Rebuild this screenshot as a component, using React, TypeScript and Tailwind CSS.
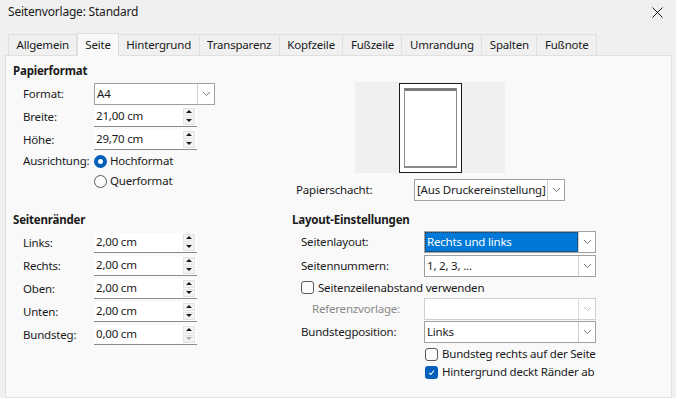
import React from 'react';

const Chevron: React.FC<{ disabled?: boolean }> = ({ disabled }) => (
  <svg width="9" height="6" viewBox="0 0 9 6" className="block">
    <polyline points="1,1 4.5,4.5 8,1" fill="none" stroke={disabled ? '#c4c4c4' : '#7a7a7a'} strokeWidth="1" />
  </svg>
);

const Dropdown: React.FC<{ value: string; width: string; selected?: boolean; disabled?: boolean }> = ({
  value,
  width,
  selected,
  disabled,
}) => (
  <div className={`flex h-[22px] ${width} border ${disabled ? 'border-[#cfcfcf]' : 'border-[#a0a0a0]'} bg-white`}>
    <div
      className={`flex-1 flex items-center px-[2px] whitespace-nowrap overflow-hidden ${
        selected ? 'bg-[#0078d7] text-white outline outline-1 outline-dotted outline-[#333] -outline-offset-1' : ''
      }`}
    >
      {value}
    </div>
    <div className={`w-[17px] flex items-center justify-center border-l ${disabled ? 'border-[#dedede]' : 'border-[#cfcfcf]'}`}>
      <Chevron disabled={disabled} />
    </div>
  </div>
);

const Spin: React.FC<{ value: string; downDisabled?: boolean }> = ({ value, downDisabled }) => (
  <div className="flex h-[20px] w-[103px] bg-white border-b border-[#8a8a8a] items-center">
    <div className="flex-1 pl-[2px]">{value}</div>
    <div className="flex flex-col gap-[1px] pr-[2px]">
      <div className="w-[12px] h-[8px] bg-[#f3f3f3] border border-[#e2e2e2] flex items-center justify-center">
        <div className="w-0 h-0 border-l-[3px] border-r-[3px] border-b-[3px] border-l-transparent border-r-transparent border-b-[#1a1a1a]" />
      </div>
      <div className="w-[12px] h-[8px] bg-[#f3f3f3] border border-[#e2e2e2] flex items-center justify-center">
        <div
          className={`w-0 h-0 border-l-[3px] border-r-[3px] border-t-[3px] border-l-transparent border-r-transparent ${
            downDisabled ? 'border-t-[#b0b0b0]' : 'border-t-[#1a1a1a]'
          }`}
        />
      </div>
    </div>
  </div>
);

const Checkbox: React.FC<{ checked?: boolean; label: string }> = ({ checked, label }) => (
  <div className="flex items-center gap-[4px] h-[18px]">
    {checked ? (
      <div className="w-[13px] h-[13px] rounded-[3px] bg-[#005fb8] flex items-center justify-center">
        <svg width="9" height="9" viewBox="0 0 9 9">
          <polyline points="2,4.8 3.8,6.5 7,2.5" fill="none" stroke="#fff" strokeWidth="1.1" />
        </svg>
      </div>
    ) : (
      <div className="w-[13px] h-[13px] rounded-[3px] border border-[#5a5a5a] bg-[#fbfbfb]" />
    )}
    <span>{label}</span>
  </div>
);

const Radio: React.FC<{ checked?: boolean; label: string }> = ({ checked, label }) => (
  <div className="flex items-center gap-[3px] h-[20px]">
    {checked ? (
      <div className="w-[13px] h-[13px] rounded-full bg-[#005fb8] flex items-center justify-center">
        <div className="w-[5px] h-[5px] rounded-full bg-white" />
      </div>
    ) : (
      <div className="w-[13px] h-[13px] rounded-full border border-[#5a5a5a] bg-[#fbfbfb]" />
    )}
    <span>{label}</span>
  </div>
);

const tabs = ['Allgemein', 'Seite', 'Hintergrund', 'Transparenz', 'Kopfzeile', 'Fußzeile', 'Umrandung', 'Spalten', 'Fußnote'];

const App: React.FC = () => {
  const margins: [string, string, boolean?][] = [
    ['Links:', '2,00 cm'],
    ['Rechts:', '2,00 cm'],
    ['Oben:', '2,00 cm'],
    ['Unten:', '2,00 cm'],
    ['Bundsteg:', '0,00 cm', true],
  ];

  return (
    <div className="w-[676px] h-[398px] bg-[#f0f0f0] text-[11.5px] tracking-[-0.2px] text-[#1a1a1a] font-['Noto_Sans',sans-serif] overflow-hidden flex flex-col">
      {/* Titelleiste */}
      <div className="h-[24px] flex items-center justify-between pl-[8px] pr-[13px] shrink-0">
        <span className="text-[12px]">Seitenvorlage: Standard</span>
        <svg width="11" height="11" viewBox="0 0 11 11">
          <path d="M0.5 0.5 L10.5 10.5 M10.5 0.5 L0.5 10.5" stroke="#1a1a1a" strokeWidth="1" />
        </svg>
      </div>

      {/* Reiter */}
      <div className="flex items-end pl-[8px] h-[31px] shrink-0">
        {tabs.map((t) =>
          t === 'Seite' ? (
            <div key={t} className="h-[23px] px-[7px] pb-[1px] flex items-center bg-[#f9f9f9] border border-b-0 border-[#e0e0e0] -mb-px relative z-10">
              {t}
            </div>
          ) : (
            <div key={t} className="h-[21px] px-[7.5px] flex items-center bg-[#f0f0f0] border border-b-0 border-l-0 first:border-l border-[#e0e0e0]">
              {t}
            </div>
          )
        )}
      </div>

      {/* Seiteninhalt */}
      <div className="flex-1 ml-[5px] mr-[4px] bg-[#f9f9f9] border border-[#e0e0e0] pt-[6px]">
        <div className="grid grid-cols-[286px_1fr]">
          {/* Papierformat */}
          <div className="pl-[7px]">
            <div className="font-bold h-[17px] leading-[17px]">Papierformat</div>
            <div className="pl-[10px] pt-[3px] flex flex-col">
              <div className="flex items-center h-[23px]">
                <span className="w-[71px]">Format:</span>
                <Dropdown value="A4" width="w-[121px]" />
              </div>
              <div className="flex items-center h-[23px]">
                <span className="w-[71px]">Breite:</span>
                <Spin value="21,00 cm" />
              </div>
              <div className="flex items-center h-[23px]">
                <span className="w-[71px]">Höhe:</span>
                <Spin value="29,70 cm" />
              </div>
              <div className="flex items-center h-[20px]">
                <span className="w-[71px]">Ausrichtung:</span>
                <Radio checked label="Hochformat" />
              </div>
              <div className="flex items-center h-[20px] pl-[71px]">
                <Radio label="Querformat" />
              </div>
            </div>
          </div>

          {/* Vorschau */}
          <div className="pt-[20px]">
            <div className="ml-[63px] w-[150px] h-[91px] bg-[#f0f0f0] flex justify-center">
              <div className="w-[63px] h-[90px] mt-[1px] bg-white border border-[#1a1a1a] p-[4px]">
                <div className="w-full h-full border border-[#8a8a8a] border-t-[3px] border-t-[#7a7a7a] border-b-2" />
              </div>
            </div>
            <div className="flex items-center mt-[5px] h-[23px] pl-[4px]">
              <span className="w-[118px]">Papierschacht:</span>
              <Dropdown value="[Aus Druckereinstellung]" width="w-[151px]" />
            </div>
          </div>
        </div>

        <div className="grid grid-cols-[286px_1fr] mt-[10px]">
          {/* Seitenränder */}
          <div className="pl-[7px]">
            <div className="font-bold h-[17px] leading-[17px]">Seitenränder</div>
            <div className="pl-[10px] pt-[3px] flex flex-col">
              {margins.map(([label, value, dis]) => (
                <div key={label} className="flex items-center h-[23px]">
                  <span className="w-[71px]">{label}</span>
                  <Spin value={value} downDisabled={dis} />
                </div>
              ))}
            </div>
          </div>

          {/* Layout-Einstellungen */}
          <div>
            <div className="font-bold h-[17px] leading-[17px]">Layout-Einstellungen</div>
            <div className="pl-[9px] pt-[2px] flex flex-col">
              <div className="flex items-center h-[24px]">
                <span className="w-[123px]">Seitenlayout:</span>
                <Dropdown value="Rechts und links" width="w-[172px]" selected />
              </div>
              <div className="flex items-center h-[23px]">
                <span className="w-[123px]">Seitennummern:</span>
                <Dropdown value="1, 2, 3, ..." width="w-[172px]" />
              </div>
              <div className="flex items-center h-[21px]">
                <Checkbox label="Seitenzeilenabstand verwenden" />
              </div>
              <div className="flex items-center h-[22px]">
                <span className="w-[123px] pl-[11px] text-[#8a8a8a]">Referenzvorlage:</span>
                <Dropdown value="" width="w-[172px]" disabled />
              </div>
              <div className="flex items-center h-[24px]">
                <span className="w-[123px]">Bundstegposition:</span>
                <Dropdown value="Links" width="w-[172px]" />
              </div>
              <div className="pl-[124px] pt-[1px] flex flex-col">
                <Checkbox label="Bundsteg rechts auf der Seite" />
                <Checkbox checked label="Hintergrund deckt Ränder ab" />
              </div>
            </div>
          </div>
        </div>
      </div>
    </div>
  );
};

export default App;
